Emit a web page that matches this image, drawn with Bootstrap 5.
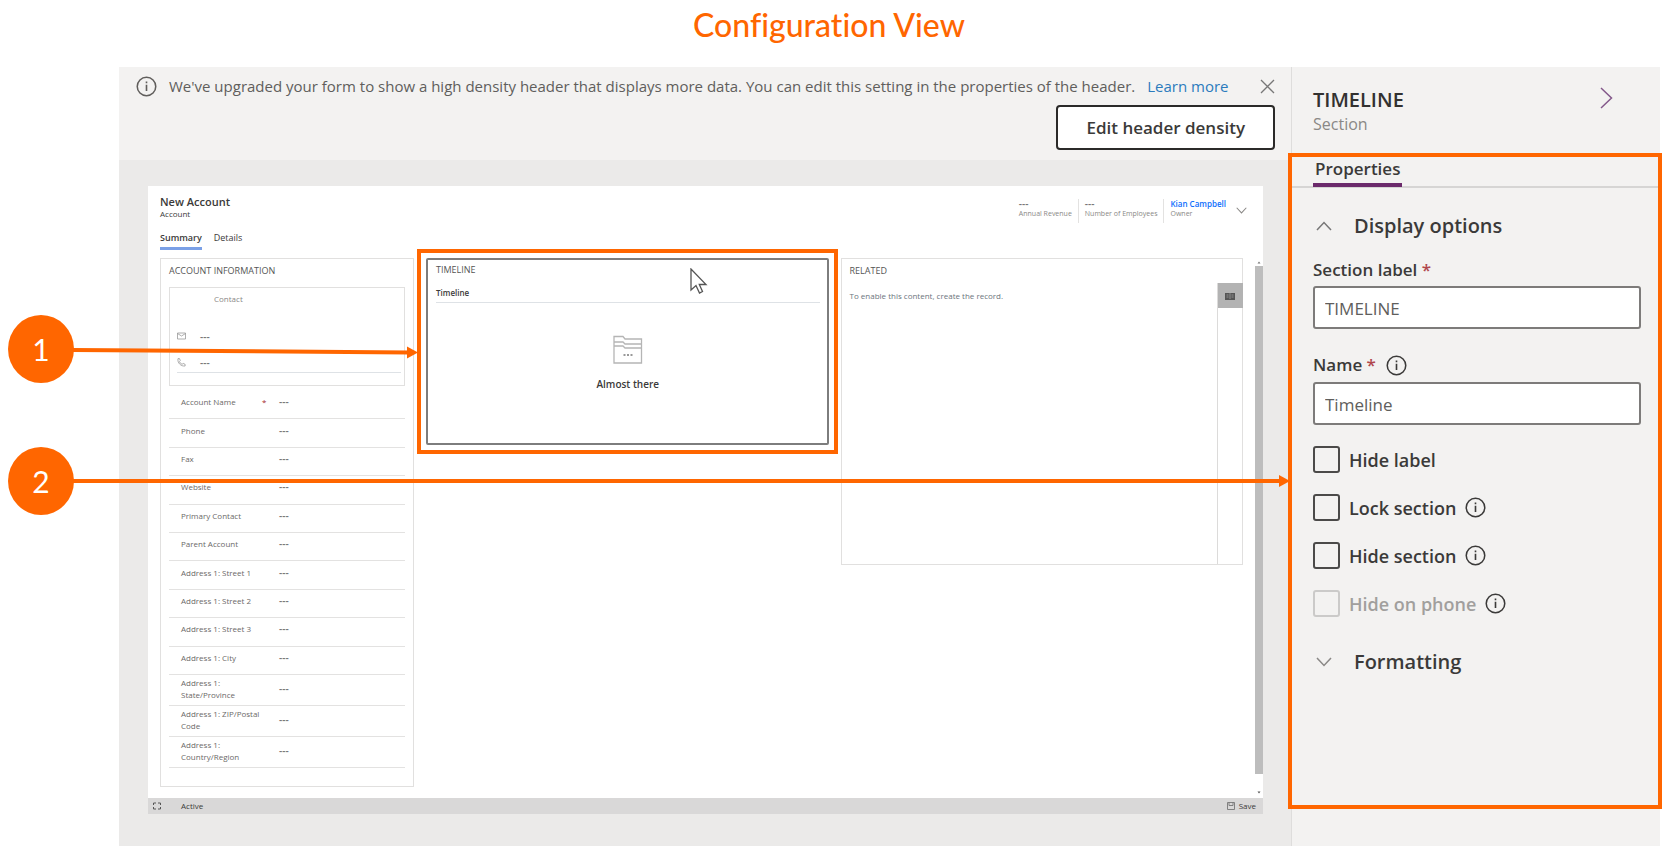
<!DOCTYPE html>
<html lang="en">
<head>
<meta charset="utf-8">
<meta name="viewport" content="width=device-width, initial-scale=1">
<title>Configuration View</title>
<link href="https://cdn.jsdelivr.net/npm/bootstrap@5.3.0/dist/css/bootstrap.min.css" rel="stylesheet">
<style>
:root{--accent:#ff6600;--panel:#f3f2f1;--canvas:#ebeae9;--line:#e3e2e1}
body{font-family:"Open Sans","Noto Sans",sans-serif;color:#3b3a39;background:#fff}
.page-title{font-family:Lato,sans-serif;font-size:32px;line-height:40px;font-variant-ligatures:none;color:var(--accent);padding:5px 20px 22px 0}
.stage{margin:0 18px 11px 119px;min-height:779px}
svg{display:block;flex:none}
/* notice */
.notice{background:var(--panel);min-height:93px;padding:8px 16px 0 17px}
.notice-text{font-size:15px;line-height:22px;color:#605e5c}
.notice-text a{color:#2b7bbd}
.btn-density{border:2px solid #2b2a29;border-radius:4px;background:#fff;color:#3b3a39;font-size:17px;font-weight:600;line-height:26px;padding:8px 28px 7px}
/* form preview */
.work{background:var(--canvas);min-width:0}
.preview{margin:26px 28px 0 29px;background:#fff}
.preview-head{padding:9px 16px 0 12px;height:72px}
.form-name{font-size:11px;line-height:14px;font-weight:600}
.empty-note{font-size:10px;line-height:14px;font-weight:600}
.tiny{font-size:8px;line-height:10px}
.faint{color:#8a8886}
.form-tabs{margin-top:12px}
.tab{font-size:9px;line-height:14px;padding:0 0 2px;border:0;border-bottom:3px solid transparent;background:none;color:#3b3a39}
.tab.on{font-weight:600;border-color:#7ba0e6}
.hfield{font-size:7px;line-height:10px;padding:0 6px;border-right:1px solid var(--line);height:24px;color:#8a8886}
.hfield:last-of-type{border-right:0}
.preview-body{padding-left:12px}
.columns{display:grid;grid-template-columns:254px 1fr 1fr;gap:12px;align-items:start;padding-right:12px}
.block{border:1px solid #e1e0df}
.block-title{font-size:9px;line-height:12px;font-weight:400;margin:0;color:#555}
.block>.block-title{padding:6px 0 10px}
.contact{border:1px solid #e1e0df;height:99px;padding:6px 3px 0 7px}
.contact-name{padding:0 0 28px 37px}
.contact-line{height:26px;gap:14px}
.fields{min-height:382px;padding-top:5px;margin-bottom:18px}
.field{flex:1 0 28px;border-bottom:1px solid #e3e2e1;padding:0 12px 5px;color:#6b6968}
.field.two{flex:0 0 31px;padding-bottom:2px}
.field span:first-child{width:81px;line-height:12px;font-size:8px}
.req{color:#a4262c;width:17px;font-size:8px}
.dots{color:#777;font-size:10px;line-height:10px;font-weight:600}
.timeline{height:187px;border:2px solid #7d7d7d;border-radius:2px;padding:4px 7px 0 8px}
.marked::after{content:"";position:absolute;inset:-11px;border:4px solid var(--accent);pointer-events:none}
.related{height:307px}
.related>.block-title{padding-bottom:6px}
.strip{width:25px;border-left:1px solid #dcdbda}
.strip button{border:0;background:#b3b3b3;width:25px;height:25px;padding:0 0 0 7px}
.pointer{position:absolute;left:262px;top:8px}
.scroller{width:8px;margin-bottom:-10px}
.scroller i{display:block;background:#bdbdbd;flex:0 1 508px}
.foot{background:#d9d8d8;height:16px;padding:0 7px 0 5px;margin-top:11px}
/* property pane */
.pane{width:369px;flex:none;background:var(--panel);border-left:1px solid #dedddc}
.pane-head{height:90px;padding:20px 47px 0 21px}
.pane-name{font-size:20px;line-height:26px;font-weight:600;margin:0;color:#323130}
.pane-kind{font-size:16px;line-height:22px;color:#8a8886}
.pane-body{height:645px}
.pane-body.marked::after{inset:-4px -2px -7px -4px}
.pane-tabs{border-bottom:2px solid #d6d5d4;padding-left:21px;height:31px}
.pane-tab{border:0;border-bottom:4px solid #6b2a6b;background:none;padding:0 2px 3px;font-size:17px;line-height:22px;font-weight:600;color:#3b3a39;margin-bottom:-1px}
.pane-form{padding:24px 19px 0 21px}
.group{border:0;background:none;padding:0 0 0 3px;font-size:20px;line-height:28px;font-weight:600;color:#3b3a39;gap:22px}
.lab{font-size:17px;line-height:24px;font-weight:600}
.lab b{color:#b0474d;font-weight:600}
.box{height:43px;border:2px solid #7d7b7a;border-radius:3px;font-size:17px;color:#605e5c;padding:2px 10px 0;box-shadow:none}
.first{margin:18px 0 4px}
.second{margin:24px 0 5px;gap:10px}
.last{margin-top:31px}
.tick{appearance:none;width:27px;height:27px;border:2px solid #4b4a49;border-radius:3px;margin:0;background:transparent;flex:none}
.tick:disabled{border-color:#cbcac9}
.tick:disabled+label{color:#a19f9d}
.checks{gap:21px;margin-top:21px}
.checks>div{height:27px;gap:9px}
.checks .lab{font-size:18px}
/* callouts */
.bubble{position:absolute;left:8px;width:66px;height:68px;border-radius:50%;background:var(--accent);color:#fff;font:30px/68px Lato,sans-serif;text-align:center}
.b1{top:315px}.b2{top:447px}
.arrow1{position:absolute;left:73px;top:341px}
.arrow2{position:absolute;left:73px;right:388px;top:475px}
.arrow2 span{height:4px;background:var(--accent)}
</style>
</head>
<body>
<svg width="0" height="0" class="position-absolute" aria-hidden="true">
  <symbol id="info" viewBox="0 0 22 22"><circle cx="11" cy="11" r="9.7" fill="none" stroke="currentColor" stroke-width="1.6"/><path d="M11 9.2v6.6M11 5.8v1.8" stroke="currentColor" stroke-width="1.7"/></symbol>
  <symbol id="down" viewBox="0 0 16 10"><path d="M1 1l7 7.5L15 1" fill="none" stroke="currentColor" stroke-width="1.5"/></symbol>
</svg>
<div class="position-relative">
  <h1 class="page-title text-center m-0">Configuration View</h1>

  <div class="stage d-flex">
    <main class="work flex-grow-1">
      <div class="notice">
        <div class="d-flex align-items-center notice-text">
          <svg width="21" height="21" class="me-2"><use href="#info"/></svg>
          <span class="ms-1">We've upgraded your form to show a high density header that displays more data. You can edit this setting in the properties of the header.</span>
          <a href="#" class="text-decoration-none text-nowrap ms-2 ps-1">Learn more</a>
          <button class="btn p-0 border-0 ms-auto" aria-label="Close"><svg width="15" height="15" viewBox="0 0 15 15"><path d="M1 1l13 13M14 1L1 14" stroke="#777" stroke-width="1.3"/></svg></button>
        </div>
        <div class="text-end"><button class="btn-density mt-2">Edit header density</button></div>
      </div>

      <div class="preview">
        <header class="preview-head d-flex">
          <div>
            <div class="form-name">New Account</div>
            <div class="tiny">Account</div>
            <nav class="form-tabs d-flex"><button class="tab on me-2">Summary</button><button class="tab ms-1">Details</button></nav>
          </div>
          <div class="d-flex ms-auto pt-1">
            <div class="hfield"><div class="dots">---</div>Annual Revenue</div>
            <div class="hfield"><div class="dots">---</div>Number of Employees</div>
            <div class="hfield"><a href="#" class="tiny text-decoration-none fw-semibold d-block">Kian Campbell</a>Owner</div>
            <svg width="11" height="7" class="ms-1 mt-2 faint"><use href="#down"/></svg>
          </div>
        </header>

        <div class="preview-body d-flex">
          <div class="columns flex-grow-1">
            <section class="block px-2">
              <h2 class="block-title">ACCOUNT INFORMATION</h2>
              <div class="contact tiny faint">
                <div class="contact-name">Contact</div>
                <div class="contact-line d-flex align-items-start"><svg width="9" height="8" viewBox="0 0 9 8"><path d="M.5 1h8v6h-8zM.5 1.5L4.500 4l4-2.500" fill="none" stroke="#999" stroke-width=".8"/></svg><span class="dots">---</span></div>
                <div class="contact-line d-flex align-items-start border-bottom h-auto pb-1"><svg width="9" height="9" viewBox="0 0 9 9"><path d="M1 .6l1.500 0 .8 2-.9 1c.5 1.300 1.500 2.200 2.700 2.700l1-.9 2 .9v1.700C4 8.500.2 5 1 .6z" fill="none" stroke="#999" stroke-width=".8"/></svg><span class="dots">---</span></div>
              </div>
              <div class="fields d-flex flex-column">
                <div class="field d-flex align-items-center"><span>Account Name</span><span class="req">*</span><span class="dots">---</span></div>
                <div class="field d-flex align-items-center"><span>Phone</span><span class="req"></span><span class="dots">---</span></div>
                <div class="field d-flex align-items-center"><span>Fax</span><span class="req"></span><span class="dots">---</span></div>
                <div class="field d-flex align-items-center"><span>Website</span><span class="req"></span><span class="dots">---</span></div>
                <div class="field d-flex align-items-center"><span>Primary Contact</span><span class="req"></span><span class="dots">---</span></div>
                <div class="field d-flex align-items-center"><span>Parent Account</span><span class="req"></span><span class="dots">---</span></div>
                <div class="field d-flex align-items-center"><span>Address 1: Street 1</span><span class="req"></span><span class="dots">---</span></div>
                <div class="field d-flex align-items-center"><span>Address 1: Street 2</span><span class="req"></span><span class="dots">---</span></div>
                <div class="field d-flex align-items-center"><span>Address 1: Street 3</span><span class="req"></span><span class="dots">---</span></div>
                <div class="field d-flex align-items-center"><span>Address 1: City</span><span class="req"></span><span class="dots">---</span></div>
                <div class="field two d-flex align-items-center"><span>Address 1:<br>State/Province</span><span class="req"></span><span class="dots">---</span></div>
                <div class="field two d-flex align-items-center"><span>Address 1: ZIP/Postal<br>Code</span><span class="req"></span><span class="dots">---</span></div>
                <div class="field two d-flex align-items-center"><span>Address 1:<br>Country/Region</span><span class="req"></span><span class="dots">---</span></div>
              </div>
            </section>

            <section class="timeline marked position-relative">
              <h2 class="block-title">TIMELINE</h2>
              <div class="tiny fw-semibold border-bottom mt-2 pt-1 pb-1">Timeline</div>
              <div class="d-flex flex-column align-items-center mt-4 pt-2">
                <svg width="30" height="30" viewBox="0 0 30 30" fill="none" stroke="#b5b5b5" stroke-width="1.300"><path d="M1 28V1.500h9l2 2.500h16.500V28zM1 7h9l2 2h16.500M1 11h9l2 2h16.500"/><path d="M10.500 20h2M14 20h2M17.500 20h2" stroke="#999" stroke-width="2"/></svg>
                <div class="empty-note mt-2 pt-1">Almost there</div>
              </div>
              <svg class="pointer" width="18" height="27" viewBox="0 0 18 27"><path d="M1 1v21l5-4.500 3.500 7.500 3-1.500L9.300 16.500H16z" fill="#fff" stroke="#555" stroke-width="1.300"/></svg>
            </section>

            <section class="block related d-flex flex-column ps-2">
              <h2 class="block-title">RELATED</h2>
              <div class="d-flex flex-grow-1">
                <div class="tiny mt-1 pt-1 text-secondary">To enable this content, create the record.</div>
                <div class="strip ms-auto"><button aria-label="Related records"><svg width="10" height="8" viewBox="0 0 10 8"><path d="M0 1h4l1 .6L6 1h4v7H0z" fill="#555"/><path d="M5 2v5M1.500 3h2M1.500 5h2M6.500 3h2M6.500 5h2" stroke="#aaa" stroke-width=".7"/></svg></button></div>
              </div>
            </section>
          </div>
          <div class="scroller d-flex flex-column">
            <svg width="8" height="8"><path d="M2.500 5.500L4 3.500l1.500 2z" fill="#777"/></svg>
            <i></i>
            <svg class="mt-auto" width="8" height="8"><path d="M2.500 2.500L4 4.500l1.500-2z" fill="#555"/></svg>
          </div>
        </div>
        <footer class="foot d-flex align-items-center tiny">
          <svg width="8" height="8" viewBox="0 0 8 8"><path d="M.5 3V1H3M5 1h2.500v2M7.500 5v2H5M3 7H.5V5" fill="none" stroke="#555"/></svg>
          <span class="ms-3 ps-1">Active</span>
          <svg class="ms-auto me-1" width="8" height="8" viewBox="0 0 8 8"><path d="M.5.5h7v7h-7zM2 .5v3h4v-3" fill="none" stroke="#777" stroke-width=".9"/></svg>
          <span>Save</span>
        </footer>
      </div>
    </main>

    <aside class="pane">
      <div class="pane-head d-flex justify-content-between">
        <div><h2 class="pane-name">TIMELINE</h2><div class="pane-kind">Section</div></div>
        <button class="btn p-0 border-0 align-self-start" aria-label="Collapse"><svg width="13" height="22" viewBox="0 0 13 22"><path d="M1 1l10.500 10L1 21" fill="none" stroke="#83588a" stroke-width="1.500"/></svg></button>
      </div>
      <div class="pane-body marked position-relative">
        <div class="pane-tabs d-flex align-items-end"><button class="pane-tab">Properties</button></div>
        <div class="pane-form">
          <button class="group d-flex align-items-center"><svg width="16" height="10" viewBox="0 0 16 10"><path d="M1 9l7-7.500L15 9" fill="none" stroke="#777" stroke-width="1.500"/></svg>Display options</button>
          <label class="lab d-block first" for="sec">Section label <b>*</b></label>
          <input id="sec" class="form-control box" value="TIMELINE">
          <div class="d-flex align-items-center second"><label class="lab" for="nm">Name <b>*</b></label><svg width="21" height="21"><use href="#info"/></svg></div>
          <input id="nm" class="form-control box" value="Timeline">
          <div class="checks d-flex flex-column">
            <div class="d-flex align-items-center"><input type="checkbox" class="tick" id="c1"><label class="lab" for="c1">Hide label</label></div>
            <div class="d-flex align-items-center"><input type="checkbox" class="tick" id="c2"><label class="lab" for="c2">Lock section</label><svg width="21" height="21"><use href="#info"/></svg></div>
            <div class="d-flex align-items-center"><input type="checkbox" class="tick" id="c3"><label class="lab" for="c3">Hide section</label><svg width="21" height="21"><use href="#info"/></svg></div>
            <div class="d-flex align-items-center"><input type="checkbox" class="tick" id="c4" disabled><label class="lab" for="c4">Hide on phone</label><svg width="21" height="21"><use href="#info"/></svg></div>
          </div>
          <button class="group d-flex align-items-center last"><svg width="16" height="10" class="faint"><use href="#down"/></svg>Formatting</button>
        </div>
      </div>
    </aside>
  </div>

  <div class="bubble b1">1</div>
  <svg class="arrow1" width="346" height="20" viewBox="0 0 346 20"><path d="M0 9l336 2.500" stroke="#f60" stroke-width="4"/><path d="M334 5.500l11 6-11 6z" fill="#f60"/></svg>
  <div class="bubble b2">2</div>
  <div class="arrow2 d-flex align-items-center"><span class="flex-grow-1"></span><svg width="11" height="12"><path d="M0 0l11 6-11 6z" fill="#f60"/></svg></div>
</div>
<script src="https://cdn.jsdelivr.net/npm/bootstrap@5.3.0/dist/js/bootstrap.bundle.min.js"></script>
</body>
</html>
